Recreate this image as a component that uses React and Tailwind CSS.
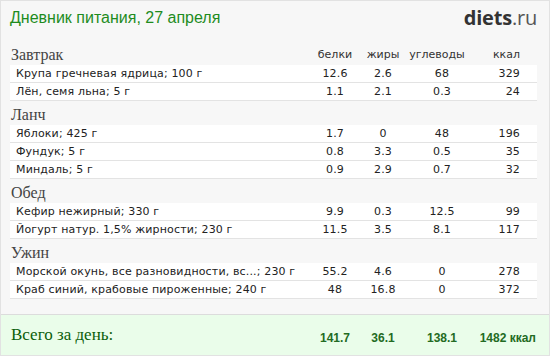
import React from "react";

const meals = [
  {
    title: "Завтрак",
    items: [
      ["Крупа гречневая ядрица; 100 г", "12.6", "2.6", "68", "329"],
      ["Лён, семя льна; 5 г", "1.1", "2.1", "0.3", "24"],
    ],
  },
  {
    title: "Ланч",
    items: [
      ["Яблоки; 425 г", "1.7", "0", "48", "196"],
      ["Фундук; 5 г", "0.8", "3.3", "0.5", "35"],
      ["Миндаль; 5 г", "0.9", "2.9", "0.7", "32"],
    ],
  },
  {
    title: "Обед",
    items: [
      ["Кефир нежирный; 330 г", "9.9", "0.3", "12.5", "99"],
      ["Йогурт натур. 1,5% жирности; 230 г", "11.5", "3.5", "8.1", "117"],
    ],
  },
  {
    title: "Ужин",
    items: [
      ["Морской окунь, все разновидности, вс...; 230 г", "55.2", "4.6", "0", "278"],
      ["Краб синий, крабовые пироженные; 240 г", "48", "16.8", "0", "372"],
    ],
  },
];

const sans = "font-['DejaVu_Sans',Verdana,sans-serif]";
const serif = "font-['Liberation_Serif','Times_New_Roman',serif]";

export default function App() {
  return (
    <div className="w-[550px] h-[356px] bg-[#f7f7f7] border border-[#e2e2e2] flex flex-col overflow-hidden">
      {/* Title */}
      <div className="h-[40px] shrink-0 flex justify-between items-start pl-[9px] pr-[12px]">
        <h1 className="pt-[7px] text-[16px] leading-[20px] text-[#1e8c1e] font-['Liberation_Sans',Arial,sans-serif]">
          Дневник питания, 27 апреля
        </h1>
        <div className="pt-[5px] text-[20px] leading-[24px] text-[#333] font-['Open_Sans',sans-serif] tracking-[-0.2px]">
          <span className="font-bold">diets</span>
          <span className="text-[#555]">.ru</span>
        </div>
      </div>

      {/* Meals */}
      <div className="pl-[9px] pr-[12px]">
        {meals.map((meal, mi) => (
          <div key={meal.title}>
            <div className="h-[24px] pt-[4px] grid grid-cols-[300px_50px_46px_72px_42px] pr-[17px]">
              <div className={`${serif} text-[16px] leading-[20px] text-[#444] pl-[1px]`}>
                {meal.title}
              </div>
              {mi === 0 && (
                <>
                  <div className={`${sans} text-[11px] leading-[20px] text-[#333] text-center`}>белки</div>
                  <div className={`${sans} text-[11px] leading-[20px] text-[#333] text-center`}>жиры</div>
                  <div className={`${sans} text-[11px] leading-[20px] text-[#333] text-center pr-[10px]`}>углеводы</div>
                  <div className={`${sans} text-[11px] leading-[20px] text-[#333] text-right`}>ккал</div>
                </>
              )}
            </div>
            {meal.items.map((row) => (
              <div
                key={row[0]}
                className={`${sans} h-[18px] bg-white border-b border-[#e3e3e3] grid grid-cols-[294px_50px_46px_72px_42px] pl-[6px] pr-[17px] text-[11px] leading-[17px] tracking-[0.15px] text-[#222]`}
              >
                <div className="whitespace-nowrap">{row[0]}</div>
                <div className="text-center">{row[1]}</div>
                <div className="text-center">{row[2]}</div>
                <div className="text-center">{row[3]}</div>
                <div className="text-right">{row[4]}</div>
              </div>
            ))}
          </div>
        ))}
      </div>

      {/* Totals */}
      <div className="mt-[15px] h-[41px] border-t border-[#dcdcdc] bg-[#eafdea] pl-[10px] pr-[13px] pt-[10px] grid grid-cols-[299px_50px_46px_72px_1fr] items-start">
        <div className={`${serif} text-[17px] leading-[20px] text-[#0b5d0b]`}>Всего за день:</div>
        {["141.7", "36.1", "138.1"].map((v) => (
          <div
            key={v}
            className="pt-[3px] text-center text-[12px] leading-[20px] font-bold text-[#236b23] font-['Liberation_Sans',Arial,sans-serif]"
          >
            {v}
          </div>
        ))}
        <div className="pt-[3px] text-right text-[12px] leading-[20px] font-bold text-[#236b23] font-['Liberation_Sans',Arial,sans-serif]">
          1482 ккал
        </div>
      </div>
    </div>
  );
}
